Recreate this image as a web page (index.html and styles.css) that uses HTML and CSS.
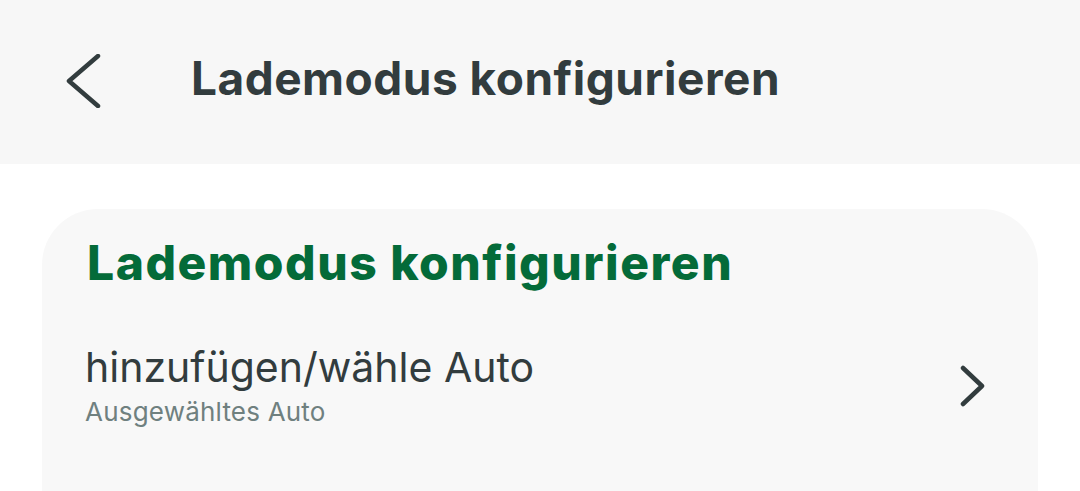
FILE: index.html
```html
<!DOCTYPE html>
<html lang="de">
<head>
<meta charset="utf-8">
<link rel="stylesheet" href="styles.css">
</head>
<body>
<header class="appbar">
  <button class="back" aria-label="Zurück">
    <svg width="36" height="54" viewBox="0 0 36 54"><polyline points="33,2 4,27 33,52" fill="none" stroke="#323c3e" stroke-width="4.5" stroke-linecap="round" stroke-linejoin="round"/></svg>
  </button>
  <h1 class="appbar-title">Lademodus konfigurieren</h1>
</header>
<main class="content">
  <section class="card">
    <h2 class="card-title">Lademodus konfigurieren</h2>
    <div class="item">
      <div class="item-text">
        <div class="item-title">hinzufügen/wähle Auto</div>
        <div class="item-sub">Ausgewähltes Auto</div>
      </div>
      <svg class="item-chevron" width="26" height="42" viewBox="0 0 26 42"><polyline points="3,3 22,21 3,39" fill="none" stroke="#323c3e" stroke-width="4.5" stroke-linecap="round" stroke-linejoin="round"/></svg>
    </div>
  </section>
</main>
</body>
</html>
```
FILE: styles.css
```css
html, body {
  margin: 0;
  padding: 0;
  background: #ffffff;
  font-family: "Inter", "Noto Sans", sans-serif;
  overflow: hidden;
}
.appbar {
  height: 164px;
  background: #f7f7f7;
  display: flex;
  align-items: center;
  box-sizing: border-box;
  padding-left: 65px;
}
.back {
  background: none;
  border: 0;
  padding: 0;
  margin: 0 0 2px 0;
  display: flex;
  width: 36px;
  height: 54px;
}
.appbar-title {
  margin: 0 0 8px 90px;
  font-size: 46px;
  line-height: 56px;
  font-weight: 700;
  color: #323c3e;
  letter-spacing: 0.5px;
}
.content {
  padding: 45px 42px 0 42px;
}
.card {
  background: #f8f8f8;
  border-radius: 56px 56px 0 0;
  padding: 25px 52px 0 45px;
  height: 330px;
  box-sizing: border-box;
}
.card-title {
  margin: 0;
  font-size: 48px;
  line-height: 58px;
  font-weight: 800;
  color: #046b39;
  letter-spacing: 1.5px;
}
.item {
  display: flex;
  align-items: center;
  justify-content: space-between;
  margin-top: 51px;
}
.item-text {
  margin-left: -2px;
}
.item-title {
  font-size: 41px;
  color: #323c3e;
  font-weight: 400;
  line-height: 48px;
}
.item-sub {
  margin-top: 5px;
  font-size: 26px;
  color: #6f807f;
  line-height: 32px;
  letter-spacing: 0.2px;
}
.item-chevron {
  display: block;
}
```
